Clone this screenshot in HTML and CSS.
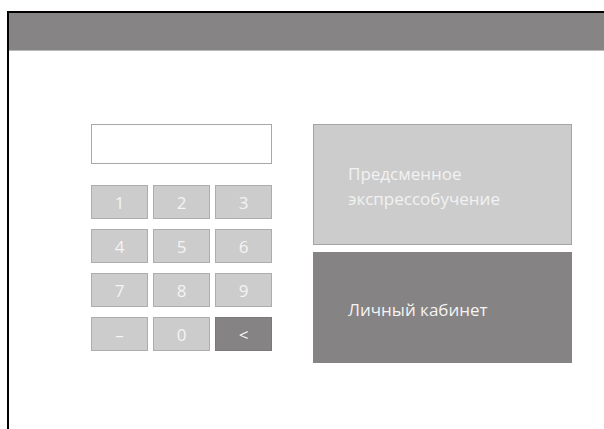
FILE: index.html
```html
<!DOCTYPE html>
<html lang="ru">
<head>
<meta charset="utf-8">
<title>Вход</title>
<link rel="stylesheet" href="styles.css">
</head>
<body>
<div class="frame">
  <header class="topbar"></header>
  <main class="content">
    <section class="pinpad">
      <div class="pin-field"></div>
      <div class="keys">
        <button class="key">1</button>
        <button class="key">2</button>
        <button class="key">3</button>
        <button class="key">4</button>
        <button class="key">5</button>
        <button class="key">6</button>
        <button class="key">7</button>
        <button class="key">8</button>
        <button class="key">9</button>
        <button class="key">–</button>
        <button class="key">0</button>
        <button class="key key-back">&lt;</button>
      </div>
    </section>
    <section class="actions">
      <button class="tile tile-light">Предсменное<br>экспрессобучение</button>
      <button class="tile tile-dark">Личный кабинет</button>
    </section>
  </main>
</div>
</body>
</html>
```
FILE: styles.css
```css
html, body {
  margin: 0;
  padding: 0;
  overflow: hidden;
  background: #ffffff;
  font-family: "Open Sans", "Noto Sans", sans-serif;
}

/* window frame: only its top-left corner is on screen */
.frame {
  box-sizing: border-box;
  margin: 11px 0 0 7px;
  width: calc(100vw - 7px);
  height: calc(100vh - 11px);
  border-top: 2px solid #000000;
  border-left: 2px solid #000000;
  background: #ffffff;
}

.topbar {
  height: 37px;
  background: #868484;
  border-bottom: 1px solid #b9b9b9;
}

.content {
  display: flex;
  gap: 41px;
  padding: 73px 0 0 82px;
}

.pinpad {
  width: 181px;
  display: flex;
  flex-direction: column;
  gap: 21px;
}

.pin-field {
  height: 38px;
  border: 1px solid #a8a8a8;
  background: #ffffff;
}

.keys {
  display: grid;
  grid-template-columns: repeat(3, 1fr);
  column-gap: 5px;
  row-gap: 10px;
}

.key {
  height: 34px;
  margin: 0;
  padding: 0;
  border: 1px solid #adadad;
  background: #cccccc;
  color: #f4f4f4;
  font-family: inherit;
  font-size: 17px;
  line-height: 1;
}

.key-back {
  background: #858383;
  border-color: #7a7878;
  color: #f6f6f6;
}

.actions {
  width: 259px;
  display: flex;
  flex-direction: column;
  gap: 7px;
}

.tile {
  margin: 0;
  padding: 3px 0 0 34px;
  display: flex;
  align-items: center;
  text-align: left;
  font-family: inherit;
  font-size: 17px;
  line-height: 25px;
}

.tile-light {
  height: 121px;
  background: #cccccc;
  border: 1px solid #a4a4a4;
  color: #f2f2f2;
}

.tile-dark {
  height: 111px;
  background: #858383;
  border: 1px solid #858383;
  color: #f4f4f4;
}
```
